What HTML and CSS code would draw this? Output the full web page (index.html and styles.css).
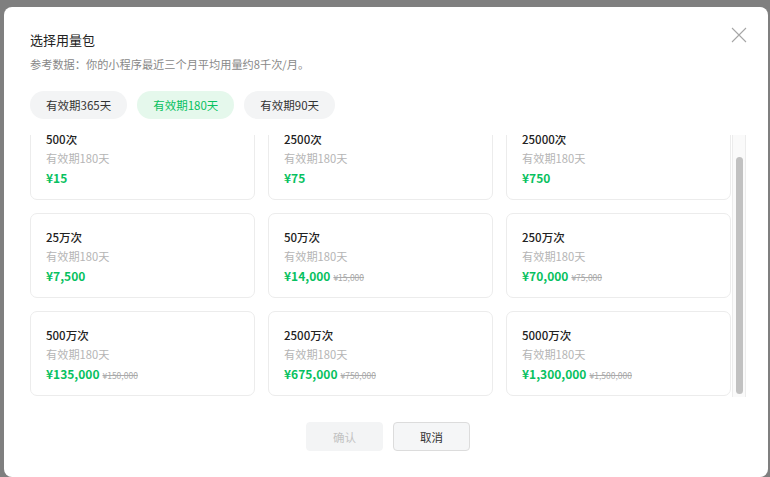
FILE: index.html
```html
<!DOCTYPE html>
<html lang="zh-CN">
<head>
  <meta charset="UTF-8">
  <meta name="viewport" content="width=device-width, initial-scale=1.0">
  <title>选择用量包</title>
  <link rel="stylesheet" href="styles.css">
</head>
<body>
  <div class="mask">
    <div class="dialog">
      <button class="close" aria-label="关闭">
        <svg width="16" height="16" viewBox="0 0 16 16">
          <path d="M1 1L15 15M15 1L1 15" stroke="#a6a6a6" stroke-width="1.1" fill="none"/>
        </svg>
      </button>
      <h2 class="title">选择用量包</h2>
      <p class="desc">参考数据：你的小程序最近三个月平均用量约8千次/月。</p>

      <div class="tabs">
        <span class="tab">有效期365天</span>
        <span class="tab active">有效期180天</span>
        <span class="tab">有效期90天</span>
      </div>

      <div class="list">
        <div class="list-body" id="list">
          <div class="grid">
            <div class="card">
              <div class="card-name">500次</div>
              <div class="card-time">有效期180天</div>
              <div class="card-price">¥15</div>
            </div>
            <div class="card">
              <div class="card-name">2500次</div>
              <div class="card-time">有效期180天</div>
              <div class="card-price">¥75</div>
            </div>
            <div class="card">
              <div class="card-name">25000次</div>
              <div class="card-time">有效期180天</div>
              <div class="card-price">¥750</div>
            </div>
            <div class="card">
              <div class="card-name">25万次</div>
              <div class="card-time">有效期180天</div>
              <div class="card-price">¥7,500</div>
            </div>
            <div class="card">
              <div class="card-name">50万次</div>
              <div class="card-time">有效期180天</div>
              <div class="card-price">¥14,000<del>¥15,000</del></div>
            </div>
            <div class="card">
              <div class="card-name">250万次</div>
              <div class="card-time">有效期180天</div>
              <div class="card-price">¥70,000<del>¥75,000</del></div>
            </div>
            <div class="card">
              <div class="card-name">500万次</div>
              <div class="card-time">有效期180天</div>
              <div class="card-price">¥135,000<del>¥150,000</del></div>
            </div>
            <div class="card">
              <div class="card-name">2500万次</div>
              <div class="card-time">有效期180天</div>
              <div class="card-price">¥675,000<del>¥750,000</del></div>
            </div>
            <div class="card">
              <div class="card-name">5000万次</div>
              <div class="card-time">有效期180天</div>
              <div class="card-price">¥1,300,000<del>¥1,500,000</del></div>
            </div>
          </div>
        </div>
        <div class="scrollbar">
          <div class="scrollbar-thumb"></div>
        </div>
      </div>

      <div class="footer">
        <button class="btn btn-disabled" disabled>确认</button>
        <button class="btn">取消</button>
      </div>
    </div>
  </div>

  <script>
    document.getElementById("list").scrollTop = 20;
  </script>
</body>
</html>
```

FILE: styles.css
```css
body {
  margin: 0;
  padding: 0;
  background-color: #7f7f7f;
  font-family: "Noto Sans CJK SC", "Noto Sans", sans-serif;
  color: #333;
  overflow: hidden;
}
.mask {
  padding: 7px 0 0 4px;
}
.dialog {
  position: relative;
  box-sizing: border-box;
  width: 764px;
  height: 470px;
  padding: 22px 22px 0 26px;
  background-color: #fff;
  border-radius: 8px;
}
.close {
  position: absolute;
  top: 20px;
  right: 21px;
  padding: 0;
  border: none;
  background: none;
  cursor: pointer;
}
.title {
  margin: 0;
  font-size: 13px;
  font-weight: normal;
  line-height: 22px;
  color: #222;
}
.desc {
  margin: 4px 0 0;
  font-size: 11.2px;
  line-height: 18px;
  color: #888;
}
.tabs {
  display: flex;
  gap: 10px;
  margin-top: 18px;
}
.tab {
  height: 28px;
  padding: 0 16px;
  border-radius: 14px;
  background-color: #f3f4f5;
  font-size: 11.5px;
  line-height: 28px;
  color: #333;
}
.tab.active {
  background-color: #e5f8ec;
  color: #07c160;
}
.list {
  display: flex;
  height: 262px;
  margin-top: 16px;
}
.list-body {
  flex: 1;
  overflow-y: scroll;
  scrollbar-width: none;
}
.list-body::-webkit-scrollbar {
  display: none;
}
.scrollbar {
  box-sizing: border-box;
  width: 14px;
  padding: 22px 2px 0 3px;
  background-color: #fafafa;
  border-left: 1px solid #ececec;
  border-right: 1px solid #ececec;
}
.scrollbar-thumb {
  height: 237px;
  border-radius: 4px;
  background-color: #c1c1c1;
}
.grid {
  display: grid;
  grid-template-columns: repeat(3, 1fr);
  gap: 13px;
  padding: 0 1px 2px 0;
}
.card {
  box-sizing: border-box;
  height: 85px;
  padding: 14px 15px 0;
  border: 1px solid #ececec;
  border-radius: 7px;
  line-height: 19px;
}
.card-name {
  font-size: 11.5px;
  font-weight: 500;
  color: #222;
}
.card-time {
  font-size: 11.2px;
  color: #b5b5b5;
}
.card-price {
  font-size: 12px;
  font-weight: bold;
  color: #07c160;
}
.card-price del {
  margin-left: 3px;
  font-size: 8.5px;
  font-weight: normal;
  color: #aaa;
}
.footer {
  display: flex;
  justify-content: center;
  gap: 10px;
  margin-top: 25px;
}
.btn {
  width: 77px;
  height: 29px;
  border: 1px solid #dcdcdc;
  border-radius: 4px;
  background-color: #f5f6f7;
  font-family: inherit;
  font-size: 11.5px;
  color: #333;
  cursor: pointer;
}
.btn-disabled {
  border-color: #f3f4f5;
  background-color: #f3f4f5;
  color: #c2c2c2;
  cursor: default;
}
```
